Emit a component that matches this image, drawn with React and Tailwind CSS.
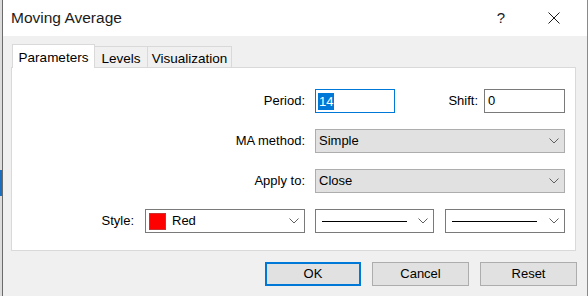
const Chevron = () => (
  <svg width="10" height="6" viewBox="0 0 10 6" className="shrink-0">
    <path d="M0.5 0.5 L5 5 L9.5 0.5" fill="none" stroke="#5f5f5f" strokeWidth="1" />
  </svg>
);

const App = () => {
  return (
    <div className="w-[588px] h-[296px] flex bg-[#f0f0f0] font-['Liberation_Sans',Arial,sans-serif] text-[13px] text-black overflow-hidden">
      {/* window behind */}
      <div className="w-[3px] h-full flex flex-col border-r border-[#6b6b6b] bg-[#dcdcdc]">
        <div className="h-[170px]" />
        <div className="h-[26px] bg-[#1a6fc0]" />
      </div>

      <div className="flex-1 flex flex-col border-r border-[#8a8a8a]">
        {/* Title bar */}
        <div className="h-[36px] bg-white flex items-center pl-[8px] shrink-0">
          <span className="text-[15.5px] text-[#1b1b1b] flex-1">Moving Average</span>
          <span className="w-[20px] text-center text-[15px] text-[#1b1b1b] mr-[37px]">?</span>
          <svg width="12" height="12" viewBox="0 0 12 12" className="mr-[27px]">
            <path d="M0.5 0.5 L11.5 11.5 M11.5 0.5 L0.5 11.5" stroke="#1b1b1b" strokeWidth="1" />
          </svg>
        </div>

        {/* Body */}
        <div className="flex-1 flex flex-col pl-[8px] pr-[11px] pt-[8px]">
          {/* Tabs */}
          <div className="flex items-end h-[23px] pl-[1px] text-[13.5px]">
            <div className="relative z-10 w-[83px] h-[24px] -mb-px bg-white border border-b-0 border-[#d9d9d9] text-center pt-[3px]">
              Parameters
            </div>
            <div className="w-[53px] h-[21px] border border-l-0 border-b-0 border-[#d9d9d9] text-center pt-[2px]">Levels</div>
            <div className="w-[84px] h-[21px] border border-l-0 border-b-0 border-[#d9d9d9] text-center pt-[2px]">Visualization</div>
          </div>

          {/* Panel */}
          <div className="h-[184px] bg-white border border-[#d9d9d9] flex flex-col gap-[16px] pt-[21px]">
            <div className="flex items-center h-[24px]">
              <span className="w-[293px] text-right">Period:</span>
              <div className="ml-[10px] w-[80px] h-[24px] border border-[#0078d7] flex items-center pl-[2px]">
                <span className="bg-[#0078d7] text-white px-px leading-[17px]">14</span>
              </div>
              <span className="w-[83px] text-right">Shift:</span>
              <div className="ml-[6px] w-[81px] h-[24px] border border-[#7a7a7a] flex items-center pl-[3px]">0</div>
            </div>

            <div className="flex items-center h-[24px]">
              <span className="w-[293px] text-right">MA method:</span>
              <div className="ml-[10px] w-[250px] h-[24px] bg-[#e1e1e1] border border-[#adadad] flex items-center pl-[3px] pr-[5px]">
                <span className="flex-1">Simple</span>
                <Chevron />
              </div>
            </div>

            <div className="flex items-center h-[24px]">
              <span className="w-[293px] text-right">Apply to:</span>
              <div className="ml-[10px] w-[250px] h-[24px] bg-[#e1e1e1] border border-[#adadad] flex items-center pl-[3px] pr-[5px]">
                <span className="flex-1">Close</span>
                <Chevron />
              </div>
            </div>

            <div className="flex items-center h-[24px]">
              <span className="w-[122px] text-right">Style:</span>
              <div className="ml-[11px] w-[160px] h-[24px] border border-[#7a7a7a] flex items-center pl-[3px] pr-[5px]">
                <span className="w-[17px] h-[17px] bg-[#ff0000] border border-[#c83232]" />
                <span className="flex-1 ml-[6px]">Red</span>
                <Chevron />
              </div>
              <div className="ml-[10px] w-[119px] h-[24px] border border-[#7a7a7a] flex items-center pl-[6px] pr-[5px]">
                <span className="w-[85px] h-px bg-black" />
                <span className="flex-1" />
                <Chevron />
              </div>
              <div className="ml-[11px] w-[120px] h-[24px] border border-[#7a7a7a] flex items-center pl-[6px] pr-[5px]">
                <span className="w-[85px] h-px bg-black" />
                <span className="flex-1" />
                <Chevron />
              </div>
            </div>
          </div>

          {/* Buttons */}
          <div className="flex justify-end gap-[11px] mt-[11px] -mr-[1px]">
            <button className="w-[96px] h-[24px] bg-[#e1e1e1] border-2 border-[#0078d7]">OK</button>
            <button className="w-[97px] h-[24px] bg-[#e1e1e1] border border-[#adadad]">Cancel</button>
            <button className="w-[97px] h-[24px] bg-[#e1e1e1] border border-[#adadad]">Reset</button>
          </div>
        </div>
      </div>
    </div>
  );
};

export default App;
